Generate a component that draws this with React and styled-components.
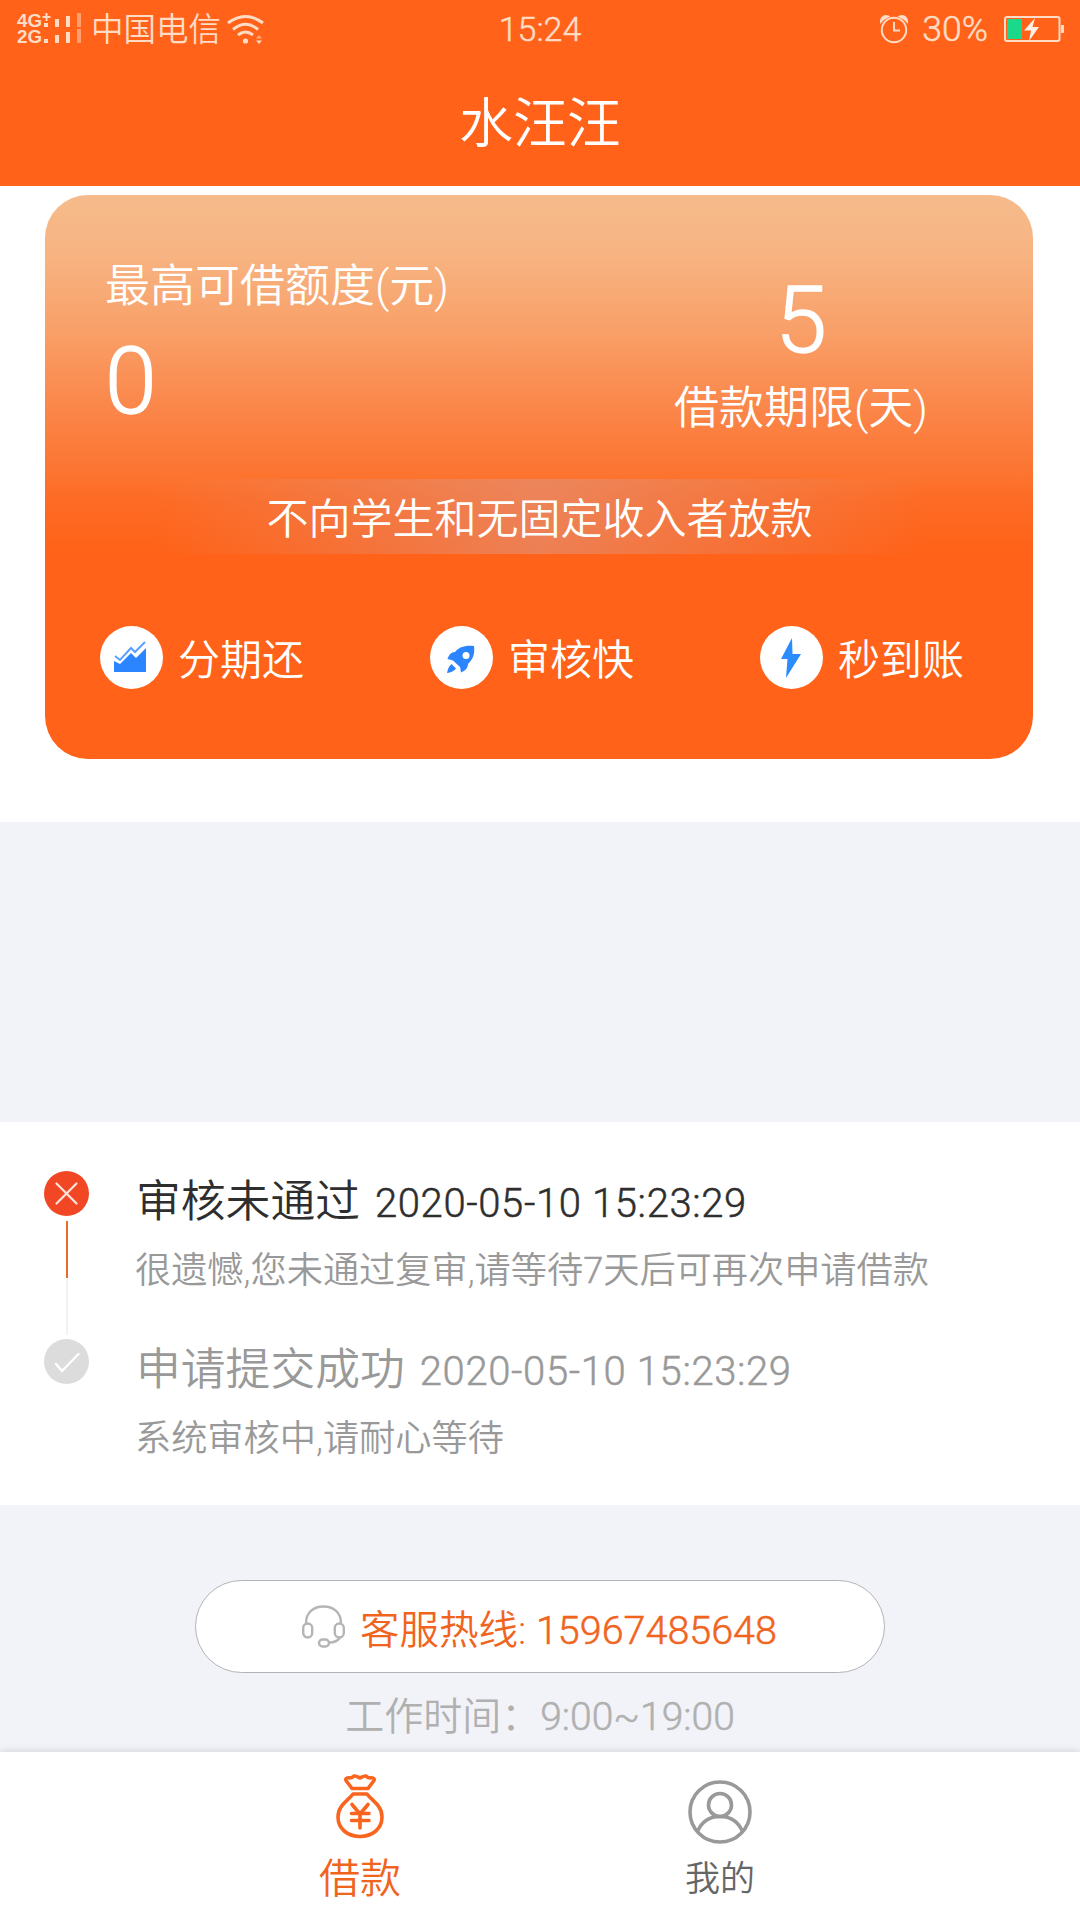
import React from "react"
import styled, { createGlobalStyle, css } from "styled-components"

const GlobalStyle = createGlobalStyle`
  * {
    box-sizing: border-box;
  }
  body {
    margin: 0;
    background: #f2f3f8;
    font-family: Roboto, "Noto Sans CJK SC DemiLight", "Noto Sans CJK SC", sans-serif;
    font-weight: 350;
  }
  svg {
    display: block;
    flex-shrink: 0;
  }
`

const Page = styled.div`
  display: flex;
  flex-direction: column;
  width: 1080px;
  height: 1920px;
  overflow: hidden;
  background: #f2f3f8;
  white-space: nowrap;
`

// light Roboto digits look thinner than the Chinese text beside them
const Digits = styled.span`
  -webkit-text-stroke: 0.5px currentColor;
`

//HEADER
const Header = styled.header`
  flex-shrink: 0;
  height: 186px;
  background: #ff6218;
  color: #fff;
`

const StatusBar = styled.div`
  display: grid;
  grid-template-columns: 1fr auto 1fr;
  height: 56px;
  padding: 0 16px;
  align-items: center;
  color: #ffdcc6;
  font-size: 34px;
  line-height: 56px;
`

const StatusGroup = styled.div`
  display: flex;
  align-items: center;
  justify-content: ${(props) => (props.$end ? "flex-end" : "flex-start")};
`

const Carrier = styled.span`
  margin: 0 6px 0 8px;
  padding-top: 2px;
  font-size: 32.5px;
`

const BatteryLevel = styled(Digits)`
  margin: 0 16px 0 14px;
  font-size: 35.5px;
`

const Title = styled.h1`
  margin: 0;
  font-size: 54px;
  font-weight: 350;
  line-height: 138px;
  text-align: center;
`

//LOAN CARD
const CardSection = styled.section`
  flex-shrink: 0;
  height: 636px;
  padding: 9px 47px 0 45px;
  background: #fff;
`

const Card = styled.div`
  height: 564px;
  border-radius: 43px;
  color: #fff;
  background: linear-gradient(
    180deg,
    #f6bb8b 0%,
    #f7b381 11%,
    #f99e66 25%,
    #fb8447 39%,
    #fc7531 49%,
    #fd6b25 54%,
    #ff6218 63%
  );
`

const Amounts = styled.div`
  display: flex;
  justify-content: space-between;
  height: 284px;
  padding: 0 105px 0 60px;
  font-size: 45px;
`

const Quota = styled.div`
  display: flex;
  flex-direction: column;
  gap: 13px;
  padding-top: 62px;
`

const Term = styled.div`
  display: flex;
  flex-direction: column;
  gap: 6px;
  padding-top: 74px;
  text-align: center;
`

const Label = styled.div`
  line-height: 60px;
`

const Value = styled.div`
  font-size: 93px;
  line-height: 104px;
  -webkit-text-stroke: 1.4px currentColor;
`

const Notice = styled.div`
  width: 770px;
  height: 75px;
  margin: 0 auto;
  padding-left: 1px;
  font-size: 42px;
  line-height: 82px;
  text-align: center;
  background: linear-gradient(
    90deg,
    rgba(226, 146, 121, 0),
    rgba(226, 146, 121, 0.62) 50%,
    rgba(226, 146, 121, 0)
  );
`

const Features = styled.div`
  display: flex;
  justify-content: space-between;
  padding: 72px 69px 0 55px;
`

const Feature = styled.div`
  display: flex;
  height: 63px;
  gap: 15px;
  font-size: 42px;
  line-height: 70px;
`

const FeatureIcon = styled.div`
  display: flex;
  width: 63px;
  height: 63px;
  align-items: center;
  justify-content: center;
  border-radius: 50%;
  background: #fff;
`

//TIMELINE
const Timeline = styled.section`
  flex-shrink: 0;
  height: 383px;
  margin-top: 300px;
  padding: 49px 44px 0;
  background: #fff;
`

const Step = styled.div`
  display: flex;
  height: 168px;
  gap: 46px;
`

const StepMark = styled.div`
  display: flex;
  width: 45px;
  flex-direction: column;
  align-items: center;
`

const StepLine = styled.div`
  width: 2px;
  height: 114px;
  margin: 5px 0 0 1px;
  background: linear-gradient(180deg, #ea6a2a 50%, #f0f3f3 50%);
`

const StepTitle = styled.div`
  display: flex;
  gap: 15px;
  height: 60px;
  padding-left: 1px;
  color: ${(props) => (props.$active ? "#2e2e2e" : "#999")};
  font-size: 44.8px;
  line-height: 62px;
`

const StepDate = styled(Digits)`
  font-size: 40px;
  line-height: 66px;
  letter-spacing: 0.62px;
`

const StepText = styled.div`
  color: #999;
  font-size: 36.2px;
  line-height: 80px;
`

//SERVICE
const Service = styled.section`
  display: flex;
  flex: 1;
  flex-direction: column;
  align-items: center;
  padding-top: 75px;
`

const Hotline = styled.div`
  display: flex;
  width: 690px;
  height: 93px;
  padding-left: 106px;
  align-items: center;
  gap: 15px;
  border: 1px solid #b4b4b8;
  border-radius: 47px;
  background: #fff;
  color: #f0641e;
  font-size: 39.5px;
`

const WorkTime = styled.div`
  height: 79px;
  color: #b0b0b0;
  font-size: 39px;
  line-height: 89px;
`

//TAB BAR
const TabBar = styled.nav`
  display: flex;
  flex-shrink: 0;
  height: 168px;
  padding: 0 180px;
  background: #fff;
  box-shadow: 0 -1px 7px rgba(0, 0, 0, 0.13);
`

const Tab = styled.div`
  display: flex;
  width: 360px;
  flex-direction: column;
  align-items: center;
  color: #666;
  font-size: 35px;
  line-height: 56px;
  padding-top: 28px;
  gap: 8px;

  ${(props) =>
    props.$active &&
    css`
      padding-top: 22px;
      gap: 12px;
      color: #f0641e;
      font-size: 41px;
    `}
`

const SignalSvg = styled.svg`
  overflow: visible;
  font-family: "Liberation Sans", sans-serif;
  font-size: 18px;
  font-weight: 700;
`

const SignalIcon = () => (
  <SignalSvg width="67" height="32" viewBox="0 0 67 32" fill="currentColor">
    <text x="1" y="14" textLength="25" lengthAdjust="spacingAndGlyphs">4G</text>
    <text x="1" y="30" textLength="25" lengthAdjust="spacingAndGlyphs">2G</text>
    <path d="M26.500 3H29.500V0H31.500V3H34.500V5H31.500V8H29.500V5H26.500Z" />
    {[0, 16].map((y) => (
      <g key={y} transform={`translate(0 ${y})`}>
        <rect x="28" y="10" width="4" height="4" />
        <rect x="39" y="6" width="4" height="8" />
        <rect x="50" y="3" width="4" height="11" />
        <rect x="61" y="0" width="4" height="14" opacity=".5" />
      </g>
    ))}
  </SignalSvg>
)

const WifiIcon = () => (
  <svg width="37" height="31" viewBox="0 0 37 31" fill="none" stroke="currentColor" strokeWidth="3">
    <path d="M1 9Q18.500-4 36 9M6 15.500Q18.500 5 31 15.500M11 21Q18.500 15 26 21" />
    <circle cx="18.500" cy="27" r="2.600" fill="currentColor" stroke="none" />
    <path d="M29 24.500L32 21L35 24.500Z" fill="currentColor" stroke="none" opacity=".6" />
    <path d="M29 26.500H35L32 30Z" fill="currentColor" stroke="none" />
  </svg>
)

const AlarmIcon = () => (
  <svg width="28" height="29" viewBox="0 0 28 29" fill="none" stroke="currentColor" strokeWidth="2">
    <circle cx="14" cy="15" r="12.200" />
    <path d="M14 7V15.500H20" />
    <path d="M1 6.500A5 5 0 0 1 8 1.500Q3.500 3.500 1 6.500ZM27 6.500A5 5 0 0 0 20 1.500Q24.500 3.500 27 6.500Z" fill="currentColor" />
  </svg>
)

const BatteryIcon = () => (
  <svg width="60" height="26" viewBox="0 0 60 26" fill="none">
    <rect x="1" y="1" width="54.500" height="24" rx="2" stroke="currentColor" strokeWidth="2" />
    <rect x="3" y="3" width="15" height="20" fill="#1bd98a" />
    <rect x="57" y="9" width="3" height="8" fill="currentColor" />
    <path d="M31 2L20 14.500H27L25 25L35 11H28.500Z" fill="#fff0e4" />
  </svg>
)

const ChartIcon = () => (
  <svg width="38" height="33" viewBox="0 0 38 33">
    <path d="M1 20L7 23L18 12L23 17L33 7V31H1Z" fill="#2b85ff" />
    <path d="M2 15L7 19L18 7L22 11L32 1" fill="none" stroke="#5b9fff" strokeWidth="2" />
  </svg>
)

const RocketIcon = () => (
  <svg width="28" height="30" viewBox="0 -2 28 30">
    <path
      d="M27 1C18 0 12 2 8 7C4 7 2 10 .5 14L6 15.500L13 22L14 27.500C18 26 21 23 21 19C26 14 28 9 27 1ZM19 7A3.500 3.500 0 1 1 19 14A3.500 3.500 0 0 1 19 7Z"
      fill="#2b85ff"
      fillRule="evenodd"
    />
    <path d="M4.500 19C2 21 .8 24 0 28C4 27.500 7 26 9 23.500Z" fill="#2b85ff" />
  </svg>
)

const BoltIcon = () => (
  <svg width="20" height="40" viewBox="0 0 20 40">
    <path d="M11 0L0 21H6.500L5 40L20 16H11.500Z" fill="#2b8cff" />
  </svg>
)

const FailIcon = () => (
  <svg width="45" height="45" viewBox="0 0 45 45">
    <circle cx="22.500" cy="22.500" r="22.500" fill="#f24724" />
    <path d="M12.500 12.500L32.500 32.500M32.500 12.500L12.500 32.500" stroke="#ffe4dc" strokeWidth="2.200" strokeLinecap="round" />
  </svg>
)

const DoneIcon = () => (
  <svg width="45" height="45" viewBox="0 0 45 45">
    <circle cx="22.500" cy="22.500" r="22.500" fill="#dcdcdc" />
    <path d="M12 25L18 32L34.500 15" fill="none" stroke="#fff" strokeWidth="2.400" strokeLinecap="round" />
  </svg>
)

const HeadsetIcon = () => (
  <svg width="43" height="43" viewBox="0 0 43 43" fill="none" stroke="#b5b5b5" strokeWidth="2.400">
    <path d="M4 18.500C4 7 12 1.500 21.500 1.500S39 7 39 18.500" />
    <rect x="1.200" y="18.500" width="9" height="14" rx="4.500" />
    <rect x="32.800" y="18.500" width="9" height="14" rx="4.500" />
    <path d="M38 32.500C36 35.500 32 37.500 27 37.500" />
    <rect x="17" y="34.500" width="10" height="7" rx="3.500" />
  </svg>
)

const MoneyBagIcon = () => (
  <svg width="48" height="65" viewBox="0 0 48 65" fill="none" stroke="#f9641e" strokeWidth="3.600" strokeLinecap="round" strokeLinejoin="round">
    <path d="M16 14.500L10 6.500C9 4 12 3.500 14 4C16 4 17 3 18 2C20 1.500 22 3 24 4C26 3 28 1.500 30 2C31 3 32 4 34 4C36 3.500 39 4 38 6.500L32 14.500Z" />
    <path d="M17 20H31C36 27 46 31 46 43C46 55 36 62.500 24 62.500S2 55 2 43C2 31 12 27 17 20Z" />
    <path d="M16 30.500L24 40L32 30.500M24 40V54M15.500 39.500H33M15.500 46.500H33" />
  </svg>
)

const UserIcon = () => (
  <svg width="64" height="64" viewBox="0 0 64 64" fill="none" stroke="#999" strokeWidth="3.600">
    <circle cx="32" cy="32" r="30" />
    <circle cx="32" cy="25" r="11.500" />
    <path d="M9.500 51.500C14 41 22 36.500 32 36.500S50 41 54.500 51.500" />
  </svg>
)

const features = [
  { icon: <ChartIcon />, text: "分期还" },
  { icon: <RocketIcon />, text: "审核快" },
  { icon: <BoltIcon />, text: "秒到账" },
]

const App = () => {
  return (
    <Page>
      <GlobalStyle />
      <Header>
        <StatusBar>
          <StatusGroup>
            <SignalIcon />
            <Carrier>中国电信</Carrier>
            <WifiIcon />
          </StatusGroup>
          <Digits>15:24</Digits>
          <StatusGroup $end>
            <AlarmIcon />
            <BatteryLevel>30%</BatteryLevel>
            <BatteryIcon />
          </StatusGroup>
        </StatusBar>
        <Title>水汪汪</Title>
      </Header>
      <CardSection>
        <Card>
          <Amounts>
            <Quota>
              <Label>最高可借额度(元)</Label>
              <Value>0</Value>
            </Quota>
            <Term>
              <Value>5</Value>
              <Label>借款期限(天)</Label>
            </Term>
          </Amounts>
          <Notice>不向学生和无固定收入者放款</Notice>
          <Features>
            {features.map((item) => (
              <Feature key={item.text}>
                <FeatureIcon>{item.icon}</FeatureIcon>
                {item.text}
              </Feature>
            ))}
          </Features>
        </Card>
      </CardSection>
      <Timeline>
        <Step>
          <StepMark>
            <FailIcon />
            <StepLine />
          </StepMark>
          <div>
            <StepTitle $active>
              审核未通过 <StepDate>2020-05-10 15:23:29</StepDate>
            </StepTitle>
            <StepText>
              很遗憾,您未通过复审,请等待<Digits>7</Digits>天后可再次申请借款
            </StepText>
          </div>
        </Step>
        <Step>
          <StepMark>
            <DoneIcon />
          </StepMark>
          <div>
            <StepTitle>
              申请提交成功 <StepDate>2020-05-10 15:23:29</StepDate>
            </StepTitle>
            <StepText>系统审核中,请耐心等待</StepText>
          </div>
        </Step>
      </Timeline>
      <Service>
        <Hotline>
          <HeadsetIcon />
          <span>
            客服热线: <Digits>15967485648</Digits>
          </span>
        </Hotline>
        <WorkTime>
          工作时间：<Digits>9:00~19:00</Digits>
        </WorkTime>
      </Service>
      <TabBar>
        <Tab $active>
          <MoneyBagIcon />
          借款
        </Tab>
        <Tab>
          <UserIcon />
          我的
        </Tab>
      </TabBar>
    </Page>
  )
}

export default App
